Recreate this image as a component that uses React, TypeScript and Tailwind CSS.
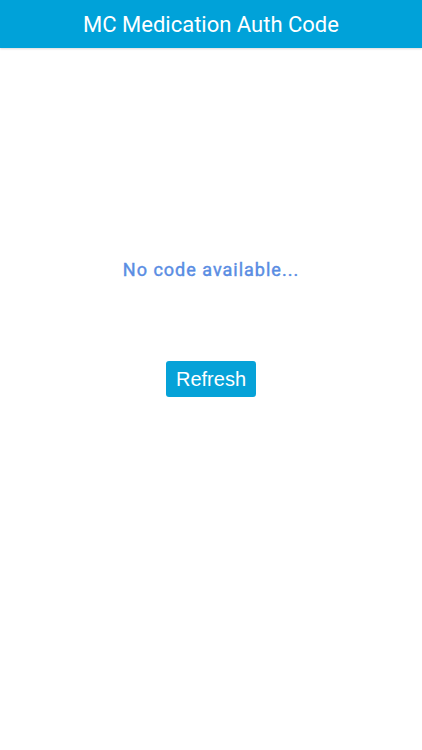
import React from 'react'

export default function App() {
  return (
    <div className="min-h-[750px] bg-white" style={{ fontFamily: 'Roboto, "Liberation Sans", sans-serif' }}>
      <header className="h-12 bg-[#00a2d9] flex items-center justify-center shadow-[0_1px_2px_rgba(0,0,0,0.15)]">
        <h1 className="text-[22px] text-white font-normal">MC Medication Auth Code</h1>
      </header>

      <main className="flex flex-col items-center">
        <div className="mt-[210px] leading-6 text-[18px] font-normal tracking-[1px] text-[#5a8de3] [-webkit-text-stroke:0.45px_#5a8de3]">
          No code available...
        </div>
        <button
          className="mt-[79px] w-[90px] h-9 rounded-[3px] bg-[#06a2d8] text-white text-[20px]"
          style={{ fontFamily: '"Liberation Sans", Arial, sans-serif' }}
        >
          Refresh
        </button>
      </main>
    </div>
  )
}
